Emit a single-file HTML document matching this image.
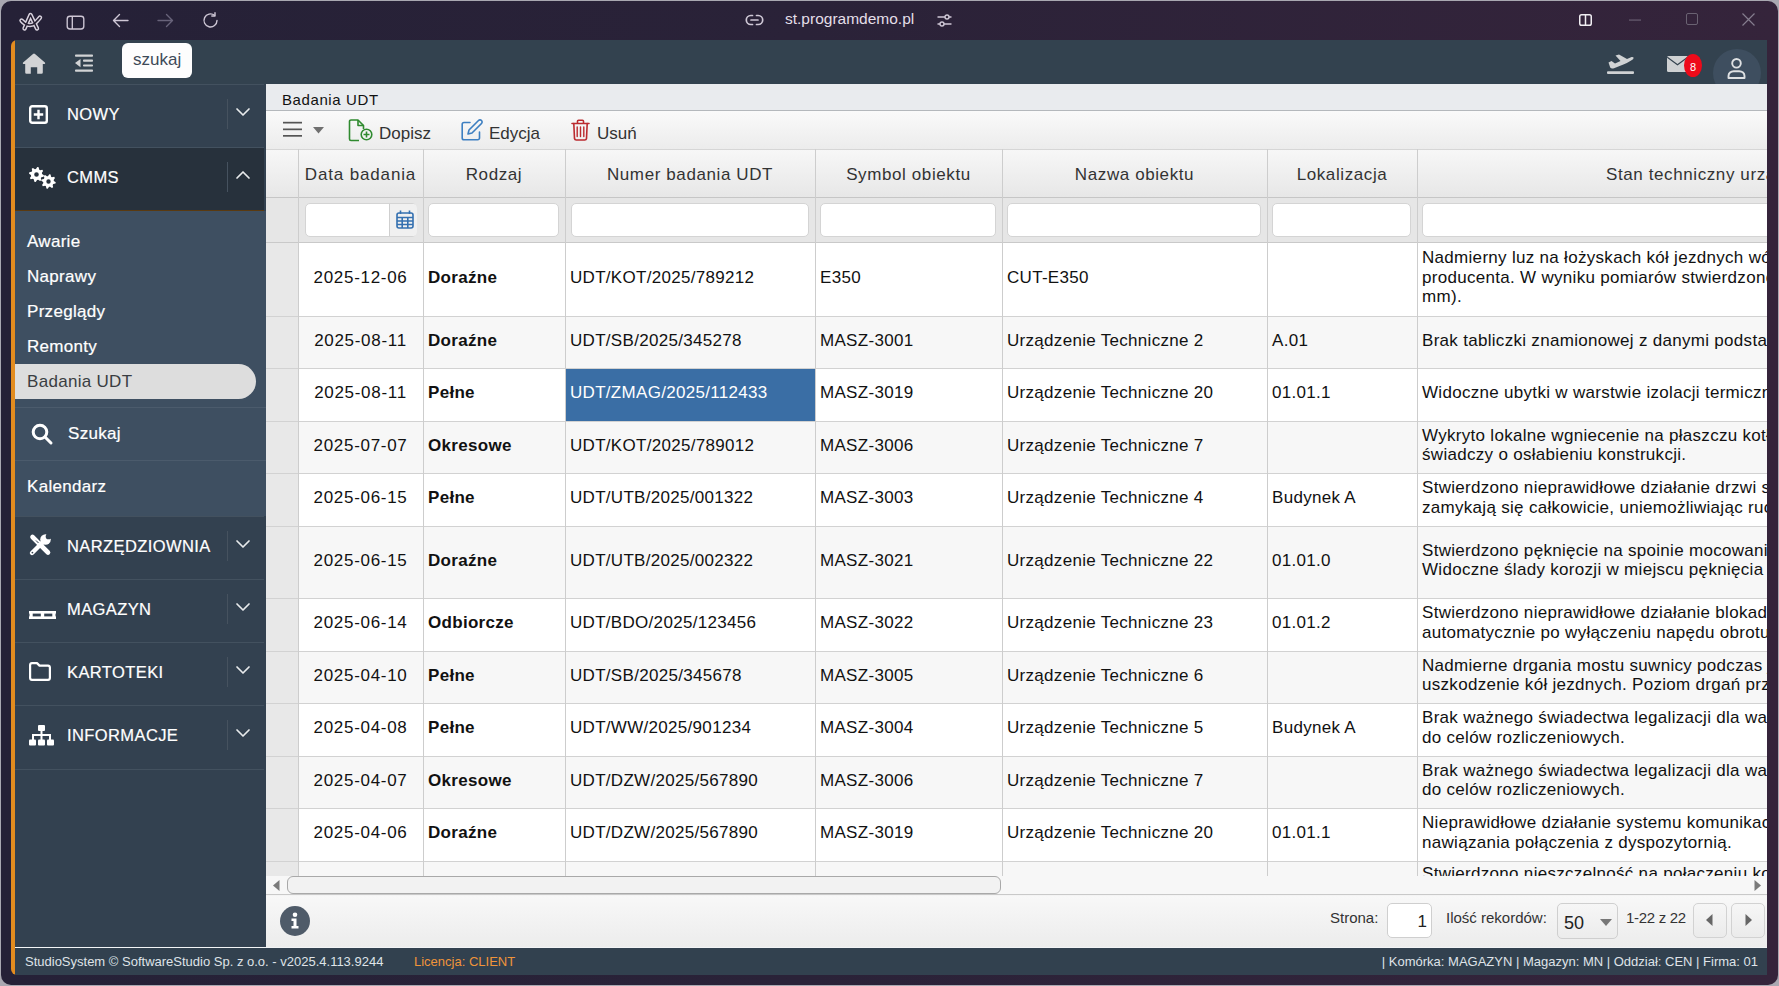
<!DOCTYPE html><html><head><meta charset="utf-8"><style>
*{box-sizing:border-box;margin:0;padding:0}
html,body{width:1779px;height:986px;overflow:hidden;background:#a9a8b1;font-family:"Liberation Sans", sans-serif}
.abs{position:absolute}
.win{position:absolute;left:1px;top:1px;width:1777px;height:984px;border-radius:10px;background:linear-gradient(90deg,#252137 0%,#2a2238 45%,#35243b 100%);overflow:hidden}
.t{position:absolute;white-space:nowrap;line-height:1}
svg{position:absolute;overflow:visible}
</style></head><body>
<div class="win"></div>


<svg style="left:19px;top:11px" width="24" height="21" viewBox="0 0 24 21" fill="none" stroke-linecap="round" stroke-linejoin="round">
<g stroke="#d8d2de" stroke-width="4.4"><path d="M5.5 17.5L11.5 4L18 17.5"/><path d="M2.5 9.5C7 15 13 15 16 12C18.5 9.5 20 8 21 6.5"/></g>
<g stroke="#241d30" stroke-width="1.5"><path d="M5.5 17.5L11.5 4L18 17.5"/><path d="M2.5 9.5C7 15 13 15 16 12C18.5 9.5 20 8 21 6.5"/></g>
</svg>
<svg style="left:66px;top:15px" width="19" height="15" viewBox="0 0 19 15" fill="none" stroke="#cfc8d6" stroke-width="1.35">
<rect x="1.2" y="1.2" width="16.6" height="12.8" rx="2.8"/><line x1="6.3" y1="1.3" x2="6.3" y2="14"/>
</svg>
<svg style="left:112px;top:13px" width="17" height="15" viewBox="0 0 17 15" fill="none" stroke="#cfc8d6" stroke-width="1.4" stroke-linecap="round" stroke-linejoin="round">
<path d="M16 7.5H1.5M7.5 1.5L1.5 7.5L7.5 13.5"/>
</svg>
<svg style="left:157px;top:13px" width="17" height="15" viewBox="0 0 17 15" fill="none" stroke="#68637a" stroke-width="1.4" stroke-linecap="round" stroke-linejoin="round">
<path d="M1 7.5H15.5M9.5 1.5L15.5 7.5L9.5 13.5"/>
</svg>
<svg style="left:202px;top:12px" width="17" height="17" viewBox="0 0 17 17" fill="none" stroke="#cfc8d6" stroke-width="1.4" stroke-linecap="round" stroke-linejoin="round">
<path d="M15 8.5A6.5 6.5 0 1 1 12.5 3.3"/><path d="M13 0.8V4H9.8"/>
</svg>
<svg style="left:746px;top:14px" width="17" height="12" viewBox="0 0 17 12" fill="none" stroke="#cfc8d6" stroke-width="1.7" stroke-linecap="round">
<path d="M6.5 1.5H4.8A4.5 4.5 0 0 0 4.8 10.5H6.5M10.5 1.5H12.2A4.5 4.5 0 0 1 12.2 10.5H10.5M5 6H12"/>
</svg>
<div class="t" style="left:785px;top:11px;font-size:15.5px;color:#e4dfe8">st.programdemo.pl</div>
<svg style="left:937px;top:14px" width="15" height="13" viewBox="0 0 15 13" fill="none" stroke="#cfc8d6" stroke-width="1.4" stroke-linecap="round">
<path d="M1 3H14M1 10H14"/><circle cx="10" cy="3" r="2" fill="#2e2539"/><circle cx="5" cy="10" r="2" fill="#2e2539"/>
</svg>
<svg style="left:1579px;top:14px" width="13" height="12" viewBox="0 0 13 12" fill="none" stroke="#f0eef2" stroke-width="1.5">
<rect x="0.75" y="0.75" width="11.5" height="10.5" rx="1.8"/><line x1="6.5" y1="1" x2="6.5" y2="11"/>
</svg>
<svg style="left:1629px;top:19px" width="13" height="2" viewBox="0 0 13 2"><rect x="0" y="0.6" width="12" height="0.9" fill="#7a7284"/></svg>
<svg style="left:1686px;top:13px" width="12" height="12" viewBox="0 0 12 12" fill="none" stroke="#6a6272" stroke-width="1"><rect x="0.5" y="0.5" width="11" height="11" rx="1.5"/></svg>
<svg style="left:1742px;top:13px" width="13" height="13" viewBox="0 0 13 13" fill="none" stroke="#857d8e" stroke-width="1.2"><path d="M0.5 0.5L12.5 12.5M12.5 0.5L0.5 12.5"/></svg>


<div class="abs" style="left:11px;top:40px;width:10px;height:935px;background:#e38c1f;border-radius:6px 0 0 6px"></div>
<div class="abs" style="left:15px;top:40px;width:1752px;height:44px;background:#33424f"></div>
<div class="abs" style="left:15px;top:84px;width:251px;height:863px;background:#334150"></div>
<div class="abs" style="left:15px;top:947px;width:1752px;height:1px;background:#f2f4f6"></div><div class="abs" style="left:15px;top:948px;width:1752px;height:27px;background:#32414f"></div>


<svg style="left:22px;top:53px" width="24" height="21" viewBox="0 0 24 21"><path d="M11 0.9A1.5 1.5 0 0 1 13 0.9L22.9 9.4A1 1 0 0 1 22.2 11.1H20.8V19.5A1.3 1.3 0 0 1 19.5 20.8H15.2V14.2H8.8V20.8H4.5A1.3 1.3 0 0 1 3.2 19.5V11.1H1.8A1 1 0 0 1 1.1 9.4Z" fill="#d2d3d5"/></svg>
<svg style="left:75px;top:54px" width="18" height="18" viewBox="0 0 18 18" fill="#d2d3d5">
<rect x="0" y="0.5" width="18" height="2.2" rx="0.8"/><rect x="8" y="5.6" width="10" height="2.2" rx="0.8"/><rect x="8" y="10.4" width="10" height="2.2" rx="0.8"/><rect x="0" y="15.5" width="18" height="2.2" rx="0.8"/>
<path d="M0 9.1L5.5 5V13.2Z"/>
</svg>
<div class="abs" style="left:122px;top:43px;width:70px;height:35px;background:#fdfdfd;border-radius:6px"></div>
<div class="t" style="left:133px;top:51px;font-size:17px;color:#3d4a58">szukaj</div>
<svg style="left:1607px;top:54px" width="27" height="20" viewBox="0 0 27 20" fill="#d0d2d4">
<rect x="0" y="17.3" width="27" height="2.7" rx="1"/>
<path d="M1.5 8.5L4.5 7L8 9.5L13.5 7L8.5 1.5L12 0.5L20 5L24 3.2C26 2.5 27.5 3.5 26 5.2C24.5 6.5 21 8.5 17 10.2L7 14.2C5.5 14.8 4 14.6 3.2 13.6Z"/>
</svg>
<svg style="left:1667px;top:56px" width="21" height="16" viewBox="0 0 21 16">
<rect x="0" y="0" width="21" height="16" rx="1.5" fill="#cfd1d3"/>
<path d="M0.3 1.2L10.5 8.8L20.7 1.2" fill="none" stroke="#33424f" stroke-width="1.1"/>
</svg>
<div class="abs" style="left:1684px;top:54px;width:18px;height:23px;border-radius:50%;background:#ee0a1a"></div>
<div class="t" style="left:1684px;width:18px;text-align:center;top:62px;font-size:11px;color:#fff">8</div>
<div class="abs" style="left:15px;top:0;width:0;height:0"></div>


<div class="abs" style="left:1713px;top:49px;width:48px;height:35px;overflow:hidden"><div style="width:48px;height:48px;border-radius:50%;background:#3e4e5f"></div></div>
<svg style="left:1727px;top:58px" width="20" height="21" viewBox="0 0 20 21" fill="none" stroke="#dfe1e3" stroke-width="1.9">
<circle cx="9.5" cy="5.3" r="4.3"/><path d="M1.5 20V18C1.5 15 3.8 13.2 6.8 13.2H12.2C15.2 13.2 17.5 15 17.5 18V20Z" stroke-linejoin="round"/>
</svg>

<div class="abs" style="left:15px;top:84px;width:249px;height:63px;background:#334150;border-top:1px solid #43515f"></div>
<svg style="left:29px;top:105px" width="19" height="19" viewBox="0 0 19 19" fill="none" stroke="#ffffff" stroke-width="2.4"><rect x="1.2" y="1.2" width="16.6" height="16.6" rx="2"/><path d="M9.5 4.8V14.2M4.8 9.5H14.2"/></svg>
<div class="t" style="left:67px;top:106px;font-size:16.5px;color:#ffffff;letter-spacing:0.4px;-webkit-text-stroke:0.2px #fff">NOWY</div>
<div class="abs" style="left:227px;top:99px;width:1px;height:30px;background:#46525f"></div>
<svg style="left:236px;top:108px" width="14" height="8" viewBox="0 0 14 8" fill="none" stroke="#e8eaec" stroke-width="1.7" stroke-linecap="round" stroke-linejoin="round"><path d="M1 1L7 7L13 1"/></svg>
<div class="abs" style="left:15px;top:147px;width:249px;height:63px;background:#27313c;border-top:1px solid #43515f"></div>
<svg style="left:29px;top:167px" width="28" height="22" viewBox="0 0 28 22" fill="#ffffff"><path fill-rule="evenodd" d="M14.96 8.24 L14.68 9.68 L12.44 10.14 L11.83 11.05 L12.26 13.30 L11.04 14.11 L9.13 12.86 L8.05 13.07 L6.76 14.96 L5.32 14.68 L4.86 12.44 L3.95 11.83 L1.70 12.26 L0.89 11.04 L2.14 9.13 L1.93 8.05 L0.04 6.76 L0.32 5.32 L2.56 4.86 L3.17 3.95 L2.74 1.70 L3.96 0.89 L5.87 2.14 L6.95 1.93 L8.24 0.04 L9.68 0.32 L10.14 2.56 L11.05 3.17 L13.30 2.74 L14.11 3.96 L12.86 5.87 L13.07 6.95Z M9.8 7.5 A2.3 2.3 0 1 0 5.2 7.5 A2.3 2.3 0 1 0 9.8 7.5Z"/><path fill-rule="evenodd" d="M26.76 15.22 L26.49 16.62 L24.26 17.05 L23.67 17.93 L24.13 20.14 L22.94 20.94 L21.07 19.67 L20.03 19.87 L18.78 21.76 L17.38 21.49 L16.95 19.26 L16.07 18.67 L13.86 19.13 L13.06 17.94 L14.33 16.07 L14.13 15.03 L12.24 13.78 L12.51 12.38 L14.74 11.95 L15.33 11.07 L14.87 8.86 L16.06 8.06 L17.93 9.33 L18.97 9.13 L20.22 7.24 L21.62 7.51 L22.05 9.74 L22.93 10.33 L25.14 9.87 L25.94 11.06 L24.67 12.93 L24.87 13.97Z M21.7 14.5 A2.2 2.2 0 1 0 17.3 14.5 A2.2 2.2 0 1 0 21.7 14.5Z"/></svg>
<div class="t" style="left:67px;top:169px;font-size:16.5px;color:#ffffff;letter-spacing:0.4px;-webkit-text-stroke:0.2px #fff">CMMS</div>
<div class="abs" style="left:227px;top:162px;width:1px;height:30px;background:#46525f"></div>
<svg style="left:236px;top:171px" width="14" height="8" viewBox="0 0 14 8" fill="none" stroke="#e8eaec" stroke-width="1.7" stroke-linecap="round" stroke-linejoin="round"><path d="M1 7L7 1L13 7"/></svg>
<div class="abs" style="left:15px;top:210px;width:249px;height:1px;background:#5a3a10"></div><div class="abs" style="left:15px;top:211px;width:249px;height:1px;background:#e2a548"></div>
<div class="abs" style="left:15px;top:211px;width:251px;height:305px;background:#3e4f61"></div>
<div class="t" style="left:27px;top:233px;font-size:17px;color:#fff;letter-spacing:0.3px;-webkit-text-stroke:0.2px #fff">Awarie</div>
<div class="t" style="left:27px;top:268px;font-size:17px;color:#fff;letter-spacing:0.3px;-webkit-text-stroke:0.2px #fff">Naprawy</div>
<div class="t" style="left:27px;top:303px;font-size:17px;color:#fff;letter-spacing:0.3px;-webkit-text-stroke:0.2px #fff">Przeglądy</div>
<div class="t" style="left:27px;top:338px;font-size:17px;color:#fff;letter-spacing:0.3px;-webkit-text-stroke:0.2px #fff">Remonty</div>
<div class="abs" style="left:15px;top:364px;width:241px;height:35px;background:#dddddd;border-radius:0 18px 18px 0"></div>
<div class="t" style="left:27px;top:373px;font-size:17px;color:#3a3d42;letter-spacing:0.3px">Badania UDT</div>
<div class="abs" style="left:15px;top:407px;width:251px;height:1px;background:#4b5b6c"></div>
<div class="abs" style="left:15px;top:460px;width:251px;height:1px;background:#4b5b6c"></div>
<svg style="left:31px;top:423px" width="22" height="22" viewBox="0 0 22 22" fill="none" stroke="#fff" stroke-width="3" stroke-linecap="round"><circle cx="9" cy="9" r="6.8"/><path d="M14 14L20 20"/></svg>
<div class="t" style="left:68px;top:425px;font-size:17px;color:#fff;letter-spacing:0.3px;-webkit-text-stroke:0.2px #fff">Szukaj</div>
<div class="t" style="left:27px;top:478px;font-size:17px;color:#fff;letter-spacing:0.3px;-webkit-text-stroke:0.2px #fff">Kalendarz</div>
<div class="abs" style="left:15px;top:516px;width:249px;height:63px;background:#334150;border-top:1px solid #43515f"></div>
<svg style="left:29px;top:534px" width="23" height="22" viewBox="0 0 23 22"><g stroke="#fff" stroke-linecap="round"><path d="M3.5 3L19 18.5" stroke-width="4.6"/><path d="M3 19L13.5 8.5" stroke-width="4.4"/></g><circle cx="16.5" cy="5.5" r="5.3" fill="#fff"/><circle cx="19.6" cy="2.4" r="2.9" fill="#334150"/><path d="M9.5 9L7 6.5" stroke="#334150" stroke-width="1"/><circle cx="3.4" cy="18.6" r="0.9" fill="#334150"/></svg>
<div class="t" style="left:67px;top:538px;font-size:16.5px;color:#ffffff;letter-spacing:0.4px;-webkit-text-stroke:0.2px #fff">NARZĘDZIOWNIA</div>
<div class="abs" style="left:227px;top:531px;width:1px;height:30px;background:#46525f"></div>
<svg style="left:236px;top:540px" width="14" height="8" viewBox="0 0 14 8" fill="none" stroke="#e8eaec" stroke-width="1.7" stroke-linecap="round" stroke-linejoin="round"><path d="M1 1L7 7L13 1"/></svg>
<div class="abs" style="left:15px;top:579px;width:249px;height:63px;background:#334150;border-top:1px solid #43515f"></div>
<svg style="left:29px;top:611px" width="27" height="8" viewBox="0 0 27 8" fill="#fff"><rect x="0" y="0" width="27" height="2.6"/><rect x="0" y="5.4" width="27" height="2.6"/><rect x="0.5" y="2" width="3.2" height="4"/><rect x="11.8" y="2" width="3.4" height="4"/><rect x="23.3" y="2" width="3.2" height="4"/></svg>
<div class="t" style="left:67px;top:601px;font-size:16.5px;color:#ffffff;letter-spacing:0.4px;-webkit-text-stroke:0.2px #fff">MAGAZYN</div>
<div class="abs" style="left:227px;top:594px;width:1px;height:30px;background:#46525f"></div>
<svg style="left:236px;top:603px" width="14" height="8" viewBox="0 0 14 8" fill="none" stroke="#e8eaec" stroke-width="1.7" stroke-linecap="round" stroke-linejoin="round"><path d="M1 1L7 7L13 1"/></svg>
<div class="abs" style="left:15px;top:642px;width:249px;height:63px;background:#334150;border-top:1px solid #43515f"></div>
<svg style="left:29px;top:662px" width="22" height="19" viewBox="0 0 22 19" fill="none" stroke="#fff" stroke-width="2.2" stroke-linejoin="round"><path d="M1.1 3A2 2 0 0 1 3 1.1H8L10.5 3.6H19A2 2 0 0 1 20.9 5.5V16A2 2 0 0 1 19 17.9H3A2 2 0 0 1 1.1 16Z"/></svg>
<div class="t" style="left:67px;top:664px;font-size:16.5px;color:#ffffff;letter-spacing:0.4px;-webkit-text-stroke:0.2px #fff">KARTOTEKI</div>
<div class="abs" style="left:227px;top:657px;width:1px;height:30px;background:#46525f"></div>
<svg style="left:236px;top:666px" width="14" height="8" viewBox="0 0 14 8" fill="none" stroke="#e8eaec" stroke-width="1.7" stroke-linecap="round" stroke-linejoin="round"><path d="M1 1L7 7L13 1"/></svg>
<div class="abs" style="left:15px;top:705px;width:249px;height:63px;background:#334150;border-top:1px solid #43515f"></div>
<svg style="left:29px;top:725px" width="25" height="21" viewBox="0 0 25 21" fill="#fff"><rect x="9" y="0" width="7" height="6" rx="1"/><rect x="0" y="14.5" width="7" height="6" rx="1"/><rect x="9" y="14.5" width="7" height="6" rx="1"/><rect x="18" y="14.5" width="7" height="6" rx="1"/><rect x="11.5" y="5" width="2" height="10"/><rect x="3" y="9" width="19" height="2"/><rect x="3" y="9" width="2" height="6"/><rect x="20" y="9" width="2" height="6"/></svg>
<div class="t" style="left:67px;top:727px;font-size:16.5px;color:#ffffff;letter-spacing:0.4px;-webkit-text-stroke:0.2px #fff">INFORMACJE</div>
<div class="abs" style="left:227px;top:720px;width:1px;height:30px;background:#46525f"></div>
<svg style="left:236px;top:729px" width="14" height="8" viewBox="0 0 14 8" fill="none" stroke="#e8eaec" stroke-width="1.7" stroke-linecap="round" stroke-linejoin="round"><path d="M1 1L7 7L13 1"/></svg>
<div class="abs" style="left:15px;top:769px;width:249px;height:1px;background:#43515f"></div>
<div class="abs" style="left:266px;top:84px;width:1501px;height:862px;background:#f4f4f4"></div>
<div class="abs" style="left:266px;top:84px;width:1501px;height:27px;background:#e9ebee;border-bottom:1px solid #b4b8bc"></div>
<div class="t" style="left:282px;top:92px;font-size:15px;letter-spacing:0.6px;color:#111">Badania UDT</div>
<div class="abs" style="left:266px;top:111px;width:1501px;height:38px;background:linear-gradient(#fafafa,#ececec)"></div>
<svg style="left:283px;top:121px" width="19" height="16" viewBox="0 0 19 16" fill="#555"><rect x="0" y="0.8" width="19" height="1.7"/><rect x="0" y="7.5" width="19" height="1.7"/><rect x="0" y="14" width="19" height="1.7"/></svg>
<svg style="left:313px;top:127px" width="11" height="7" viewBox="0 0 11 7" fill="#707070"><path d="M0 0H11L5.5 6.5Z"/></svg>
<svg style="left:348px;top:119px" width="26" height="23" viewBox="0 0 26 23" fill="none" stroke="#2f8a2f" stroke-width="1.6" stroke-linejoin="round"><path d="M11 21.5H3A1.5 1.5 0 0 1 1.5 20V2.5A1.5 1.5 0 0 1 3 1H10L15.5 6.5V10"/><path d="M10 1V6.5H15.5"/><circle cx="18.5" cy="15.5" r="5.3" fill="#f4f4f4"/><path d="M18.5 12.5V18.5M15.5 15.5H21.5"/></svg>
<div class="t" style="left:379px;top:125px;font-size:17px;color:#333">Dopisz</div>
<svg style="left:461px;top:119px" width="22" height="22" viewBox="0 0 22 22" fill="none" stroke="#3d7fc1" stroke-width="1.6" stroke-linejoin="round" stroke-linecap="round"><path d="M9 3.5H3A1.8 1.8 0 0 0 1.2 5.3V19A1.8 1.8 0 0 0 3 20.8H16.7A1.8 1.8 0 0 0 18.5 19V13"/><path d="M17.5 1.5A2 2 0 0 1 20.5 4.5L11 14L7 15L8 11Z"/></svg>
<div class="t" style="left:489px;top:125px;font-size:17px;color:#333">Edycja</div>
<svg style="left:571px;top:119px" width="19" height="22" viewBox="0 0 19 22" fill="none" stroke="#bb2a2f" stroke-width="1.6" stroke-linejoin="round" stroke-linecap="round"><path d="M1 4.5H18M6.5 4.5V2.2A1 1 0 0 1 7.5 1.2H11.5A1 1 0 0 1 12.5 2.2V4.5"/><path d="M2.8 4.5L3.5 19.5A1.8 1.8 0 0 0 5.3 21H13.7A1.8 1.8 0 0 0 15.5 19.5L16.2 4.5"/><path d="M6.2 8V17.5M9.5 8V17.5M12.8 8V17.5" stroke-width="1.4"/></svg>
<div class="t" style="left:597px;top:125px;font-size:17px;color:#333">Usuń</div>
<div class="abs" style="left:266px;top:149px;width:1501px;height:727px;overflow:hidden">
<div class="abs" style="left:0;top:0;width:1501px;height:49px;background:linear-gradient(#f7f7f7,#e7e7e7);border-top:1px solid #d6d6d6;border-bottom:1px solid #c6c6c6"></div>
<div class="abs" style="left:0;top:49px;width:1501px;height:45px;background:#e6e6e6;border-bottom:1px solid #c9c9c9"></div>
<div class="abs" style="left:32px;top:94px;width:1470px;height:73px;background:#ffffff;"></div>
<div class="abs" style="left:32px;top:167px;width:1470px;height:52px;background:#f7f7f7;border-top:1px solid #d2d2d2"></div>
<div class="abs" style="left:32px;top:219px;width:1470px;height:53px;background:#ffffff;border-top:1px solid #d2d2d2"></div>
<div class="abs" style="left:32px;top:272px;width:1470px;height:52px;background:#f7f7f7;border-top:1px solid #d2d2d2"></div>
<div class="abs" style="left:32px;top:324px;width:1470px;height:53px;background:#ffffff;border-top:1px solid #d2d2d2"></div>
<div class="abs" style="left:32px;top:377px;width:1470px;height:72px;background:#f7f7f7;border-top:1px solid #d2d2d2"></div>
<div class="abs" style="left:32px;top:449px;width:1470px;height:53px;background:#ffffff;border-top:1px solid #d2d2d2"></div>
<div class="abs" style="left:32px;top:502px;width:1470px;height:52px;background:#f7f7f7;border-top:1px solid #d2d2d2"></div>
<div class="abs" style="left:32px;top:554px;width:1470px;height:53px;background:#ffffff;border-top:1px solid #d2d2d2"></div>
<div class="abs" style="left:32px;top:607px;width:1470px;height:52px;background:#f7f7f7;border-top:1px solid #d2d2d2"></div>
<div class="abs" style="left:32px;top:659px;width:1470px;height:53px;background:#ffffff;border-top:1px solid #d2d2d2"></div>
<div class="abs" style="left:32px;top:712px;width:1470px;height:53px;background:#f7f7f7;border-top:1px solid #d2d2d2"></div>
<div class="abs" style="left:0;top:94px;width:32px;height:700px;background:#e8e8e8"></div>
<div class="abs" style="left:0;top:167px;width:32px;height:1px;background:#d2d2d2"></div>
<div class="abs" style="left:0;top:219px;width:32px;height:1px;background:#d2d2d2"></div>
<div class="abs" style="left:0;top:272px;width:32px;height:1px;background:#d2d2d2"></div>
<div class="abs" style="left:0;top:324px;width:32px;height:1px;background:#d2d2d2"></div>
<div class="abs" style="left:0;top:377px;width:32px;height:1px;background:#d2d2d2"></div>
<div class="abs" style="left:0;top:449px;width:32px;height:1px;background:#d2d2d2"></div>
<div class="abs" style="left:0;top:502px;width:32px;height:1px;background:#d2d2d2"></div>
<div class="abs" style="left:0;top:554px;width:32px;height:1px;background:#d2d2d2"></div>
<div class="abs" style="left:0;top:607px;width:32px;height:1px;background:#d2d2d2"></div>
<div class="abs" style="left:0;top:659px;width:32px;height:1px;background:#d2d2d2"></div>
<div class="abs" style="left:0;top:712px;width:32px;height:1px;background:#d2d2d2"></div>
<div class="abs" style="left:300px;top:220px;width:250px;height:52px;background:#3a6ea5"></div>
<div class="abs" style="left:32px;top:0;width:1px;height:727px;background:#cdcdcd"></div>
<div class="abs" style="left:157px;top:0;width:1px;height:727px;background:#cdcdcd"></div>
<div class="abs" style="left:299px;top:0;width:1px;height:727px;background:#cdcdcd"></div>
<div class="abs" style="left:549px;top:0;width:1px;height:727px;background:#cdcdcd"></div>
<div class="abs" style="left:736px;top:0;width:1px;height:727px;background:#cdcdcd"></div>
<div class="abs" style="left:1001px;top:0;width:1px;height:727px;background:#cdcdcd"></div>
<div class="abs" style="left:1151px;top:0;width:1px;height:727px;background:#cdcdcd"></div>
<div class="t" style="left:32px;width:125px;text-align:center;top:17px;font-size:17px;color:#333;letter-spacing:0.85px">Data badania</div>
<div class="t" style="left:157px;width:142px;text-align:center;top:17px;font-size:17px;color:#333;letter-spacing:0.6px">Rodzaj</div>
<div class="t" style="left:299px;width:250px;text-align:center;top:17px;font-size:17px;color:#333;letter-spacing:0.6px">Numer badania UDT</div>
<div class="t" style="left:549px;width:187px;text-align:center;top:17px;font-size:17px;color:#333;letter-spacing:0.6px">Symbol obiektu</div>
<div class="t" style="left:736px;width:265px;text-align:center;top:17px;font-size:17px;color:#333;letter-spacing:0.6px">Nazwa obiektu</div>
<div class="t" style="left:1001px;width:150px;text-align:center;top:17px;font-size:17px;color:#333;letter-spacing:0.6px">Lokalizacja</div>
<div class="t" style="left:1340px;top:17px;font-size:17px;color:#333;letter-spacing:0.6px">Stan techniczny urządzenia</div>
<div class="abs" style="left:39px;top:54px;width:112px;height:34px;background:#fff;border:1px solid #d4d4d4;border-radius:5px"></div>
<div class="abs" style="left:162px;top:54px;width:131px;height:34px;background:#fff;border:1px solid #d4d4d4;border-radius:5px"></div>
<div class="abs" style="left:305px;top:54px;width:238px;height:34px;background:#fff;border:1px solid #d4d4d4;border-radius:5px"></div>
<div class="abs" style="left:554px;top:54px;width:176px;height:34px;background:#fff;border:1px solid #d4d4d4;border-radius:5px"></div>
<div class="abs" style="left:741px;top:54px;width:254px;height:34px;background:#fff;border:1px solid #d4d4d4;border-radius:5px"></div>
<div class="abs" style="left:1006px;top:54px;width:139px;height:34px;background:#fff;border:1px solid #d4d4d4;border-radius:5px"></div>
<div class="abs" style="left:1156px;top:54px;width:478px;height:34px;background:#fff;border:1px solid #d4d4d4;border-radius:5px"></div>
<div class="abs" style="left:123px;top:55px;width:28px;height:32px;background:#f0f0f0;border-left:1px solid #cfcfcf;border-radius:0 4px 4px 0"></div>
<svg style="left:130px;top:61px" width="18" height="19" viewBox="0 0 18 19" fill="none" stroke="#3470b0" stroke-width="1.6"><rect x="1" y="3" width="16" height="15" rx="2"/><path d="M4.5 0.5V4M13.5 0.5V4M1 7.5H17M1 11H17M1 14.5H17M6.2 7.5V18M11.8 7.5V18"/></svg>
<div class="t" style="left:32px;width:125px;text-align:center;top:118.5px;line-height:20px;font-size:17px;letter-spacing:0.7px;color:#111">2025-12-06</div>
<div class="t" style="left:162px;top:118.5px;line-height:20px;font-size:17px;letter-spacing:0.3px;font-weight:bold;color:#111">Doraźne</div>
<div class="t" style="left:304px;top:118.5px;line-height:20px;font-size:17px;letter-spacing:0.3px;color:#111">UDT/KOT/2025/789212</div>
<div class="t" style="left:554px;top:118.5px;line-height:20px;font-size:17px;letter-spacing:0.3px;color:#111">E350</div>
<div class="t" style="left:741px;top:118.5px;line-height:20px;font-size:17px;letter-spacing:0.3px;color:#111">CUT-E350</div>
<div class="t" style="left:1006px;top:118.5px;line-height:20px;font-size:17px;letter-spacing:0.3px;color:#111"></div>
<div class="t" style="left:1156px;top:99.1px;line-height:19.6px;font-size:17px;letter-spacing:0.3px;color:#111">Nadmierny luz na łożyskach kół jezdnych wózka suwnicy przekraczający<br>producenta. W wyniku pomiarów stwierdzono luz wynoszący<br>mm).</div>
<div class="t" style="left:32px;width:125px;text-align:center;top:181.5px;line-height:20px;font-size:17px;letter-spacing:0.7px;color:#111">2025-08-11</div>
<div class="t" style="left:162px;top:181.5px;line-height:20px;font-size:17px;letter-spacing:0.3px;font-weight:bold;color:#111">Doraźne</div>
<div class="t" style="left:304px;top:181.5px;line-height:20px;font-size:17px;letter-spacing:0.3px;color:#111">UDT/SB/2025/345278</div>
<div class="t" style="left:554px;top:181.5px;line-height:20px;font-size:17px;letter-spacing:0.3px;color:#111">MASZ-3001</div>
<div class="t" style="left:741px;top:181.5px;line-height:20px;font-size:17px;letter-spacing:0.3px;color:#111">Urządzenie Techniczne 2</div>
<div class="t" style="left:1006px;top:181.5px;line-height:20px;font-size:17px;letter-spacing:0.3px;color:#111">A.01</div>
<div class="t" style="left:1156px;top:181.7px;line-height:19.6px;font-size:17px;letter-spacing:0.3px;color:#111">Brak tabliczki znamionowej z danymi podstawowymi urządzenia</div>
<div class="t" style="left:32px;width:125px;text-align:center;top:234.0px;line-height:20px;font-size:17px;letter-spacing:0.7px;color:#111">2025-08-11</div>
<div class="t" style="left:162px;top:234.0px;line-height:20px;font-size:17px;letter-spacing:0.3px;font-weight:bold;color:#111">Pełne</div>
<div class="t" style="left:304px;top:234.0px;line-height:20px;font-size:17px;letter-spacing:0.3px;color:#fff">UDT/ZMAG/2025/112433</div>
<div class="t" style="left:554px;top:234.0px;line-height:20px;font-size:17px;letter-spacing:0.3px;color:#111">MASZ-3019</div>
<div class="t" style="left:741px;top:234.0px;line-height:20px;font-size:17px;letter-spacing:0.3px;color:#111">Urządzenie Techniczne 20</div>
<div class="t" style="left:1006px;top:234.0px;line-height:20px;font-size:17px;letter-spacing:0.3px;color:#111">01.01.1</div>
<div class="t" style="left:1156px;top:234.2px;line-height:19.6px;font-size:17px;letter-spacing:0.3px;color:#111">Widoczne ubytki w warstwie izolacji termicznej przewodów</div>
<div class="t" style="left:32px;width:125px;text-align:center;top:286.5px;line-height:20px;font-size:17px;letter-spacing:0.7px;color:#111">2025-07-07</div>
<div class="t" style="left:162px;top:286.5px;line-height:20px;font-size:17px;letter-spacing:0.3px;font-weight:bold;color:#111">Okresowe</div>
<div class="t" style="left:304px;top:286.5px;line-height:20px;font-size:17px;letter-spacing:0.3px;color:#111">UDT/KOT/2025/789012</div>
<div class="t" style="left:554px;top:286.5px;line-height:20px;font-size:17px;letter-spacing:0.3px;color:#111">MASZ-3006</div>
<div class="t" style="left:741px;top:286.5px;line-height:20px;font-size:17px;letter-spacing:0.3px;color:#111">Urządzenie Techniczne 7</div>
<div class="t" style="left:1006px;top:286.5px;line-height:20px;font-size:17px;letter-spacing:0.3px;color:#111"></div>
<div class="t" style="left:1156px;top:276.9px;line-height:19.6px;font-size:17px;letter-spacing:0.3px;color:#111">Wykryto lokalne wgniecenie na płaszczu kotła, które<br>świadczy o osłabieniu konstrukcji.</div>
<div class="t" style="left:32px;width:125px;text-align:center;top:339.0px;line-height:20px;font-size:17px;letter-spacing:0.7px;color:#111">2025-06-15</div>
<div class="t" style="left:162px;top:339.0px;line-height:20px;font-size:17px;letter-spacing:0.3px;font-weight:bold;color:#111">Pełne</div>
<div class="t" style="left:304px;top:339.0px;line-height:20px;font-size:17px;letter-spacing:0.3px;color:#111">UDT/UTB/2025/001322</div>
<div class="t" style="left:554px;top:339.0px;line-height:20px;font-size:17px;letter-spacing:0.3px;color:#111">MASZ-3003</div>
<div class="t" style="left:741px;top:339.0px;line-height:20px;font-size:17px;letter-spacing:0.3px;color:#111">Urządzenie Techniczne 4</div>
<div class="t" style="left:1006px;top:339.0px;line-height:20px;font-size:17px;letter-spacing:0.3px;color:#111">Budynek A</div>
<div class="t" style="left:1156px;top:329.4px;line-height:19.6px;font-size:17px;letter-spacing:0.3px;color:#111">Stwierdzono nieprawidłowe działanie drzwi szybowych, które nie<br>zamykają się całkowicie, uniemożliwiając ruch windy</div>
<div class="t" style="left:32px;width:125px;text-align:center;top:401.5px;line-height:20px;font-size:17px;letter-spacing:0.7px;color:#111">2025-06-15</div>
<div class="t" style="left:162px;top:401.5px;line-height:20px;font-size:17px;letter-spacing:0.3px;font-weight:bold;color:#111">Doraźne</div>
<div class="t" style="left:304px;top:401.5px;line-height:20px;font-size:17px;letter-spacing:0.3px;color:#111">UDT/UTB/2025/002322</div>
<div class="t" style="left:554px;top:401.5px;line-height:20px;font-size:17px;letter-spacing:0.3px;color:#111">MASZ-3021</div>
<div class="t" style="left:741px;top:401.5px;line-height:20px;font-size:17px;letter-spacing:0.3px;color:#111">Urządzenie Techniczne 22</div>
<div class="t" style="left:1006px;top:401.5px;line-height:20px;font-size:17px;letter-spacing:0.3px;color:#111">01.01.0</div>
<div class="t" style="left:1156px;top:391.9px;line-height:19.6px;font-size:17px;letter-spacing:0.3px;color:#111">Stwierdzono pęknięcie na spoinie mocowania wysięgnika<br>Widoczne ślady korozji w miejscu pęknięcia spoiny</div>
<div class="t" style="left:32px;width:125px;text-align:center;top:464.0px;line-height:20px;font-size:17px;letter-spacing:0.7px;color:#111">2025-06-14</div>
<div class="t" style="left:162px;top:464.0px;line-height:20px;font-size:17px;letter-spacing:0.3px;font-weight:bold;color:#111">Odbiorcze</div>
<div class="t" style="left:304px;top:464.0px;line-height:20px;font-size:17px;letter-spacing:0.3px;color:#111">UDT/BDO/2025/123456</div>
<div class="t" style="left:554px;top:464.0px;line-height:20px;font-size:17px;letter-spacing:0.3px;color:#111">MASZ-3022</div>
<div class="t" style="left:741px;top:464.0px;line-height:20px;font-size:17px;letter-spacing:0.3px;color:#111">Urządzenie Techniczne 23</div>
<div class="t" style="left:1006px;top:464.0px;line-height:20px;font-size:17px;letter-spacing:0.3px;color:#111">01.01.2</div>
<div class="t" style="left:1156px;top:454.4px;line-height:19.6px;font-size:17px;letter-spacing:0.3px;color:#111">Stwierdzono nieprawidłowe działanie blokady, która nie<br>automatycznie po wyłączeniu napędu obrotu</div>
<div class="t" style="left:32px;width:125px;text-align:center;top:516.5px;line-height:20px;font-size:17px;letter-spacing:0.7px;color:#111">2025-04-10</div>
<div class="t" style="left:162px;top:516.5px;line-height:20px;font-size:17px;letter-spacing:0.3px;font-weight:bold;color:#111">Pełne</div>
<div class="t" style="left:304px;top:516.5px;line-height:20px;font-size:17px;letter-spacing:0.3px;color:#111">UDT/SB/2025/345678</div>
<div class="t" style="left:554px;top:516.5px;line-height:20px;font-size:17px;letter-spacing:0.3px;color:#111">MASZ-3005</div>
<div class="t" style="left:741px;top:516.5px;line-height:20px;font-size:17px;letter-spacing:0.3px;color:#111">Urządzenie Techniczne 6</div>
<div class="t" style="left:1006px;top:516.5px;line-height:20px;font-size:17px;letter-spacing:0.3px;color:#111"></div>
<div class="t" style="left:1156px;top:506.9px;line-height:19.6px;font-size:17px;letter-spacing:0.3px;color:#111">Nadmierne drgania mostu suwnicy podczas jazdy wskazują na<br>uszkodzenie kół jezdnych. Poziom drgań przekracza</div>
<div class="t" style="left:32px;width:125px;text-align:center;top:569.0px;line-height:20px;font-size:17px;letter-spacing:0.7px;color:#111">2025-04-08</div>
<div class="t" style="left:162px;top:569.0px;line-height:20px;font-size:17px;letter-spacing:0.3px;font-weight:bold;color:#111">Pełne</div>
<div class="t" style="left:304px;top:569.0px;line-height:20px;font-size:17px;letter-spacing:0.3px;color:#111">UDT/WW/2025/901234</div>
<div class="t" style="left:554px;top:569.0px;line-height:20px;font-size:17px;letter-spacing:0.3px;color:#111">MASZ-3004</div>
<div class="t" style="left:741px;top:569.0px;line-height:20px;font-size:17px;letter-spacing:0.3px;color:#111">Urządzenie Techniczne 5</div>
<div class="t" style="left:1006px;top:569.0px;line-height:20px;font-size:17px;letter-spacing:0.3px;color:#111">Budynek A</div>
<div class="t" style="left:1156px;top:559.4px;line-height:19.6px;font-size:17px;letter-spacing:0.3px;color:#111">Brak ważnego świadectwa legalizacji dla wagi stosowanej<br>do celów rozliczeniowych.</div>
<div class="t" style="left:32px;width:125px;text-align:center;top:621.5px;line-height:20px;font-size:17px;letter-spacing:0.7px;color:#111">2025-04-07</div>
<div class="t" style="left:162px;top:621.5px;line-height:20px;font-size:17px;letter-spacing:0.3px;font-weight:bold;color:#111">Okresowe</div>
<div class="t" style="left:304px;top:621.5px;line-height:20px;font-size:17px;letter-spacing:0.3px;color:#111">UDT/DZW/2025/567890</div>
<div class="t" style="left:554px;top:621.5px;line-height:20px;font-size:17px;letter-spacing:0.3px;color:#111">MASZ-3006</div>
<div class="t" style="left:741px;top:621.5px;line-height:20px;font-size:17px;letter-spacing:0.3px;color:#111">Urządzenie Techniczne 7</div>
<div class="t" style="left:1006px;top:621.5px;line-height:20px;font-size:17px;letter-spacing:0.3px;color:#111"></div>
<div class="t" style="left:1156px;top:611.9px;line-height:19.6px;font-size:17px;letter-spacing:0.3px;color:#111">Brak ważnego świadectwa legalizacji dla wagi stosowanej<br>do celów rozliczeniowych.</div>
<div class="t" style="left:32px;width:125px;text-align:center;top:674.0px;line-height:20px;font-size:17px;letter-spacing:0.7px;color:#111">2025-04-06</div>
<div class="t" style="left:162px;top:674.0px;line-height:20px;font-size:17px;letter-spacing:0.3px;font-weight:bold;color:#111">Doraźne</div>
<div class="t" style="left:304px;top:674.0px;line-height:20px;font-size:17px;letter-spacing:0.3px;color:#111">UDT/DZW/2025/567890</div>
<div class="t" style="left:554px;top:674.0px;line-height:20px;font-size:17px;letter-spacing:0.3px;color:#111">MASZ-3019</div>
<div class="t" style="left:741px;top:674.0px;line-height:20px;font-size:17px;letter-spacing:0.3px;color:#111">Urządzenie Techniczne 20</div>
<div class="t" style="left:1006px;top:674.0px;line-height:20px;font-size:17px;letter-spacing:0.3px;color:#111">01.01.1</div>
<div class="t" style="left:1156px;top:664.4px;line-height:19.6px;font-size:17px;letter-spacing:0.3px;color:#111">Nieprawidłowe działanie systemu komunikacji uniemożliwia<br>nawiązania połączenia z dyspozytornią.</div>
<div class="t" style="left:32px;width:125px;text-align:center;top:727.0px;line-height:20px;font-size:17px;letter-spacing:0.7px;color:#111"></div>
<div class="t" style="left:162px;top:727.0px;line-height:20px;font-size:17px;letter-spacing:0.3px;font-weight:bold;color:#111"></div>
<div class="t" style="left:304px;top:727.0px;line-height:20px;font-size:17px;letter-spacing:0.3px;color:#111"></div>
<div class="t" style="left:554px;top:727.0px;line-height:20px;font-size:17px;letter-spacing:0.3px;color:#111"></div>
<div class="t" style="left:741px;top:727.0px;line-height:20px;font-size:17px;letter-spacing:0.3px;color:#111"></div>
<div class="t" style="left:1006px;top:727.0px;line-height:20px;font-size:17px;letter-spacing:0.3px;color:#111"></div>
<div class="t" style="left:1156px;top:715.0px;line-height:19.6px;font-size:17px;letter-spacing:0.3px;color:#111">Stwierdzono nieszczelność na połączeniu kołnierzowym</div>
</div>
<div class="abs" style="left:266px;top:876px;width:1501px;height:19px;background:#f7f7f7;border-bottom:1px solid #c9c9c9"></div>
<svg style="left:273px;top:880px" width="7" height="11" viewBox="0 0 7 11" fill="#7a7a7a"><path d="M6.5 0V11L0 5.5Z"/></svg>
<svg style="left:1754px;top:880px" width="7" height="11" viewBox="0 0 7 11" fill="#7a7a7a"><path d="M0.5 0V11L7 5.5Z"/></svg>
<div class="abs" style="left:287px;top:876px;width:714px;height:18px;background:#f2f2f2;border:1px solid #a9a9a9;border-radius:6px"></div>
<div class="abs" style="left:266px;top:896px;width:1501px;height:51px;background:linear-gradient(#f8f8f8,#ececec)"></div>
<div class="abs" style="left:280px;top:906px;width:30px;height:30px;border-radius:50%;background:#4f5b69"></div>
<svg style="left:280px;top:906px" width="30" height="30" viewBox="0 0 30 30" fill="#fff"><circle cx="15" cy="8.8" r="2.3"/><path d="M11.5 12.5H16.5V20H18.5V22.5H11.5V20H13.5V15H11.5Z"/></svg>
<div class="t" style="left:1330px;top:910px;font-size:15px;color:#333">Strona:</div>
<div class="abs" style="left:1387px;top:903px;width:45px;height:35px;background:#fff;border:1px solid #cfcfcf;border-radius:5px"></div>
<div class="t" style="left:1387px;width:40px;text-align:right;top:913px;font-size:17px;color:#222">1</div>
<div class="t" style="left:1446px;top:910px;font-size:15px;color:#333">Ilość rekordów:</div>
<div class="abs" style="left:1557px;top:903px;width:61px;height:36px;background:linear-gradient(#f6f6f6,#ececec);border:1px solid #cfcfcf;border-radius:5px"></div>
<div class="t" style="left:1564px;top:914px;font-size:18px;color:#222">50</div>
<svg style="left:1600px;top:919px" width="12" height="7" viewBox="0 0 12 7" fill="#777"><path d="M0 0H12L6 7Z"/></svg>
<div class="t" style="left:1626px;top:910px;font-size:15px;color:#333;letter-spacing:-0.3px">1-22 z 22</div>
<div class="abs" style="left:1693px;top:903px;width:34px;height:35px;background:linear-gradient(#f6f6f6,#ebebeb);border:1px solid #d2d2d2;border-radius:5px"></div>
<div class="abs" style="left:1731px;top:903px;width:34px;height:35px;background:linear-gradient(#f6f6f6,#ebebeb);border:1px solid #d2d2d2;border-radius:5px"></div>
<svg style="left:1706px;top:914px" width="7" height="12" viewBox="0 0 7 12" fill="#666"><path d="M6.5 0V12L0 6Z"/></svg>
<svg style="left:1745px;top:914px" width="7" height="12" viewBox="0 0 7 12" fill="#666"><path d="M0.5 0V12L7 6Z"/></svg>
<div class="t" style="left:25px;top:955px;font-size:13px;color:#dfe3e8">StudioSystem © SoftwareStudio Sp. z o.o. - v2025.4.113.9244</div>
<div class="t" style="left:414px;top:955px;font-size:13px;color:#f0943a">Licencja: CLIENT</div>
<div class="t" style="right:21px;top:955px;font-size:13px;color:#dfe3e8">| Komórka: MAGAZYN | Magazyn: MN | Oddział: CEN | Firma: 01</div>
</body></html>
